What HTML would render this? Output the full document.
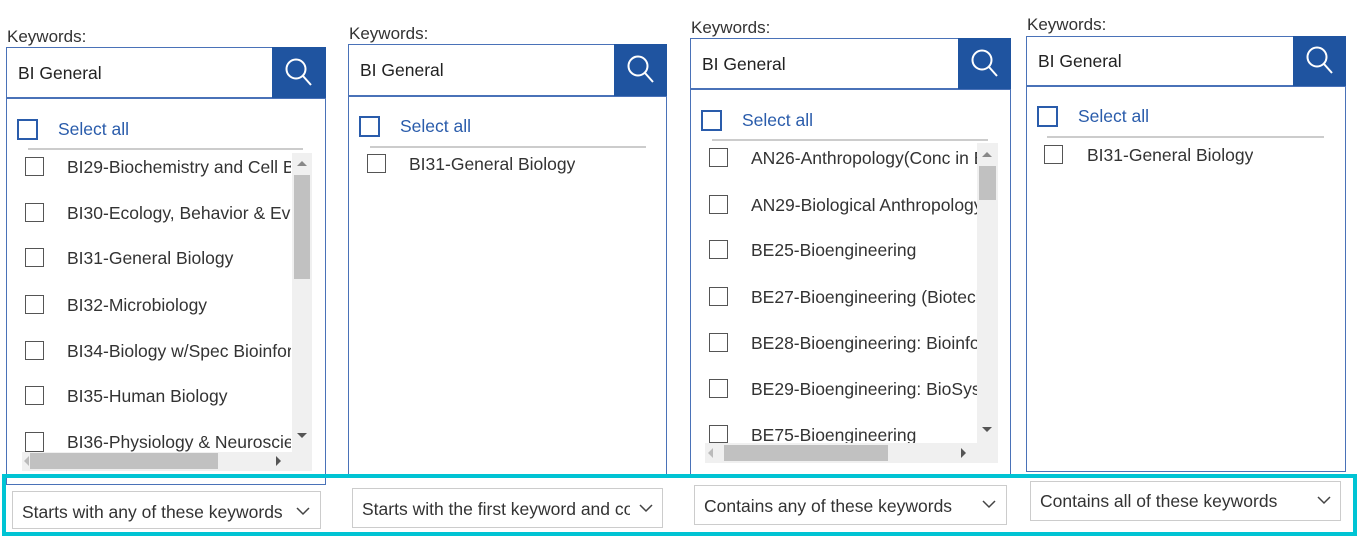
<!DOCTYPE html>
<html><head><meta charset="utf-8"><style>
*{box-sizing:border-box;margin:0;padding:0}
body{width:1369px;height:537px;background:#fff;position:relative;overflow:hidden;font-family:"Liberation Sans",Arial,sans-serif;color:#333}
.a{position:absolute}
.lbl{font-size:17px;color:#333}
.box{border:1.5px solid #4a72b8;background:#fff}
.inp{font-size:17.5px;color:#222}
.btn{background:#1f54a0}
.sa{font-size:17.5px;color:#2a5cab}
.cbb{width:21px;height:21px;border:2px solid #2a5cab}
.cb{width:19px;height:19px;border:1.5px solid #555;background:#fff}
.it{font-size:17.5px;color:#333;white-space:nowrap;overflow:hidden}
.div{height:1.5px;background:#ccc}
.sb{background:#f0f0f0}
.th{background:#c1c1c1}
.dd{border:1px solid #ccc;background:#fff;font-size:17.5px;color:#333;white-space:nowrap;overflow:hidden;padding-left:9px}
.cy{border:4px solid #00c4d4}
</style></head><body>

<!-- Column 1 -->
<div class="a lbl" style="left:7px;top:27px">Keywords:</div>
<div class="a box" style="left:6px;top:47px;width:320px;height:438px"></div>
<div class="a" style="left:6px;top:97px;width:320px;height:1.5px;background:#4a72b8"></div>
<div class="a inp" style="left:18px;top:63px">BI General</div>
<div class="a btn" style="left:272px;top:47px;width:54px;height:51px"></div>
<svg class="a" style="left:284px;top:57px" width="30" height="32" viewBox="0 0 30 32"><circle cx="12" cy="12" r="9.5" fill="none" stroke="#fff" stroke-width="2"/><path d="M19 19 L27 28" stroke="#fff" stroke-width="2"/></svg>
<div class="a cbb" style="left:17px;top:119px"></div>
<div class="a sa" style="left:58px;top:119px">Select all</div>
<div class="a div" style="left:28px;top:148px;width:275px"></div>
<div class="a sb" style="left:292px;top:153px;width:20px;height:300px"></div>
<div class="a th" style="left:294px;top:175px;width:16px;height:104px"></div>
<div class="a" style="left:297px;top:161px;width:0;height:0;border:5px solid transparent;border-bottom:5px solid #888;border-top:0"></div>
<div class="a" style="left:297px;top:433px;width:0;height:0;border:5px solid transparent;border-top:5px solid #555;border-bottom:0"></div>
<div class="a sb" style="left:22px;top:452px;width:290px;height:19px"></div>
<div class="a th" style="left:30px;top:453px;width:188px;height:16px"></div>
<div class="a" style="left:276px;top:456px;width:0;height:0;border:5px solid transparent;border-left:5px solid #555;border-right:0"></div>
<div class="a" style="left:24px;top:456px;width:0;height:0;border:5px solid transparent;border-right:5px solid #bbb;border-left:0"></div>
<div class="a cb" style="left:25px;top:157px"></div><div class="a it" style="left:67px;top:157px;width:224px">BI29-Biochemistry and Cell Biology</div>
<div class="a cb" style="left:25px;top:203px"></div><div class="a it" style="left:67px;top:203px;width:224px">BI30-Ecology, Behavior &amp; Evolution</div>
<div class="a cb" style="left:25px;top:248px"></div><div class="a it" style="left:67px;top:248px;width:224px">BI31-General Biology</div>
<div class="a cb" style="left:25px;top:295px"></div><div class="a it" style="left:67px;top:295px;width:224px">BI32-Microbiology</div>
<div class="a cb" style="left:25px;top:341px"></div><div class="a it" style="left:67px;top:341px;width:224px">BI34-Biology w/Spec Bioinformatics</div>
<div class="a cb" style="left:25px;top:386px"></div><div class="a it" style="left:67px;top:386px;width:224px">BI35-Human Biology</div>
<div class="a cb" style="left:25px;top:432px;height:20px"></div><div class="a it" style="left:67px;top:432px;width:224px;height:20px">BI36-Physiology &amp; Neuroscience</div>

<!-- Column 2 -->
<div class="a lbl" style="left:349px;top:24px">Keywords:</div>
<div class="a box" style="left:348px;top:44px;width:319px;height:432px"></div>
<div class="a" style="left:348px;top:95px;width:319px;height:1.5px;background:#4a72b8"></div>
<div class="a inp" style="left:360px;top:60px">BI General</div>
<div class="a btn" style="left:614px;top:44px;width:53px;height:52px"></div>
<svg class="a" style="left:626px;top:54px" width="30" height="32" viewBox="0 0 30 32"><circle cx="12" cy="12" r="9.5" fill="none" stroke="#fff" stroke-width="2"/><path d="M19 19 L27 28" stroke="#fff" stroke-width="2"/></svg>
<div class="a cbb" style="left:359px;top:116px"></div>
<div class="a sa" style="left:400px;top:116px">Select all</div>
<div class="a div" style="left:370px;top:146px;width:276px"></div>
<div class="a cb" style="left:367px;top:154px"></div><div class="a it" style="left:409px;top:154px">BI31-General Biology</div>

<!-- Column 3 -->
<div class="a lbl" style="left:691px;top:18px">Keywords:</div>
<div class="a box" style="left:690px;top:38px;width:321px;height:440px"></div>
<div class="a" style="left:690px;top:88px;width:321px;height:1.5px;background:#4a72b8"></div>
<div class="a inp" style="left:702px;top:54px">BI General</div>
<div class="a btn" style="left:958px;top:38px;width:53px;height:51px"></div>
<svg class="a" style="left:970px;top:48px" width="30" height="32" viewBox="0 0 30 32"><circle cx="12" cy="12" r="9.5" fill="none" stroke="#fff" stroke-width="2"/><path d="M19 19 L27 28" stroke="#fff" stroke-width="2"/></svg>
<div class="a cbb" style="left:701px;top:110px"></div>
<div class="a sa" style="left:742px;top:110px">Select all</div>
<div class="a div" style="left:712px;top:139px;width:276px"></div>
<div class="a sb" style="left:977px;top:143px;width:21px;height:300px"></div>
<div class="a th" style="left:979px;top:166px;width:17px;height:34px"></div>
<div class="a" style="left:982px;top:152px;width:0;height:0;border:5px solid transparent;border-bottom:5px solid #888;border-top:0"></div>
<div class="a" style="left:982px;top:427px;width:0;height:0;border:5px solid transparent;border-top:5px solid #555;border-bottom:0"></div>
<div class="a sb" style="left:705px;top:443px;width:293px;height:20px"></div>
<div class="a th" style="left:724px;top:445px;width:164px;height:16px"></div>
<div class="a" style="left:961px;top:448px;width:0;height:0;border:5px solid transparent;border-left:5px solid #555;border-right:0"></div>
<div class="a" style="left:708px;top:448px;width:0;height:0;border:5px solid transparent;border-right:5px solid #bbb;border-left:0"></div>
<div class="a cb" style="left:709px;top:148px"></div><div class="a it" style="left:751px;top:148px;width:226px">AN26-Anthropology(Conc in Bio)</div>
<div class="a cb" style="left:709px;top:195px"></div><div class="a it" style="left:751px;top:195px;width:226px">AN29-Biological Anthropology</div>
<div class="a cb" style="left:709px;top:240px"></div><div class="a it" style="left:751px;top:240px;width:226px">BE25-Bioengineering</div>
<div class="a cb" style="left:709px;top:287px"></div><div class="a it" style="left:751px;top:287px;width:226px">BE27-Bioengineering (Biotech)</div>
<div class="a cb" style="left:709px;top:333px"></div><div class="a it" style="left:751px;top:333px;width:226px">BE28-Bioengineering: Bioinformatics</div>
<div class="a cb" style="left:709px;top:379px"></div><div class="a it" style="left:751px;top:379px;width:226px">BE29-Bioengineering: BioSystems</div>
<div class="a cb" style="left:709px;top:425px;height:18px"></div><div class="a it" style="left:751px;top:425px;width:226px;height:18px">BE75-Bioengineering</div>

<!-- Column 4 -->
<div class="a lbl" style="left:1027px;top:15px">Keywords:</div>
<div class="a box" style="left:1026px;top:36px;width:320px;height:436px"></div>
<div class="a" style="left:1026px;top:85px;width:320px;height:1.5px;background:#4a72b8"></div>
<div class="a inp" style="left:1038px;top:51px">BI General</div>
<div class="a btn" style="left:1293px;top:36px;width:53px;height:50px"></div>
<svg class="a" style="left:1305px;top:45px" width="30" height="32" viewBox="0 0 30 32"><circle cx="12" cy="12" r="9.5" fill="none" stroke="#fff" stroke-width="2"/><path d="M19 19 L27 28" stroke="#fff" stroke-width="2"/></svg>
<div class="a cbb" style="left:1037px;top:106px"></div>
<div class="a sa" style="left:1078px;top:106px">Select all</div>
<div class="a div" style="left:1047px;top:136px;width:277px"></div>
<div class="a cb" style="left:1044px;top:145px"></div><div class="a it" style="left:1087px;top:145px">BI31-General Biology</div>

<!-- Cyan highlight -->
<div class="a cy" style="left:2px;top:474px;width:1355px;height:62px"></div>

<!-- Dropdowns -->
<div class="a dd" style="left:12px;top:491px;width:309px;height:38px;line-height:40px">Starts with any of these keywords</div>
<div class="a dd" style="left:352px;top:488px;width:311px;height:40px;line-height:41px"><span style="display:inline-block;width:268px;overflow:hidden;vertical-align:top">Starts with the first keyword and contains</span></div>
<div class="a dd" style="left:694px;top:485px;width:313px;height:40px;line-height:41px">Contains any of these keywords</div>
<div class="a dd" style="left:1030px;top:481px;width:311px;height:40px;line-height:39px">Contains all of these keywords</div>
<svg class="a" style="left:296px;top:507px" width="14" height="9"><path d="M1 1 L7 7 L13 1" fill="none" stroke="#444" stroke-width="1.5"/></svg>
<svg class="a" style="left:639px;top:504px" width="14" height="9"><path d="M1 1 L7 7 L13 1" fill="none" stroke="#444" stroke-width="1.5"/></svg>
<svg class="a" style="left:982px;top:500px" width="14" height="9"><path d="M1 1 L7 7 L13 1" fill="none" stroke="#444" stroke-width="1.5"/></svg>
<svg class="a" style="left:1317px;top:496px" width="14" height="9"><path d="M1 1 L7 7 L13 1" fill="none" stroke="#444" stroke-width="1.5"/></svg>
</body></html>
